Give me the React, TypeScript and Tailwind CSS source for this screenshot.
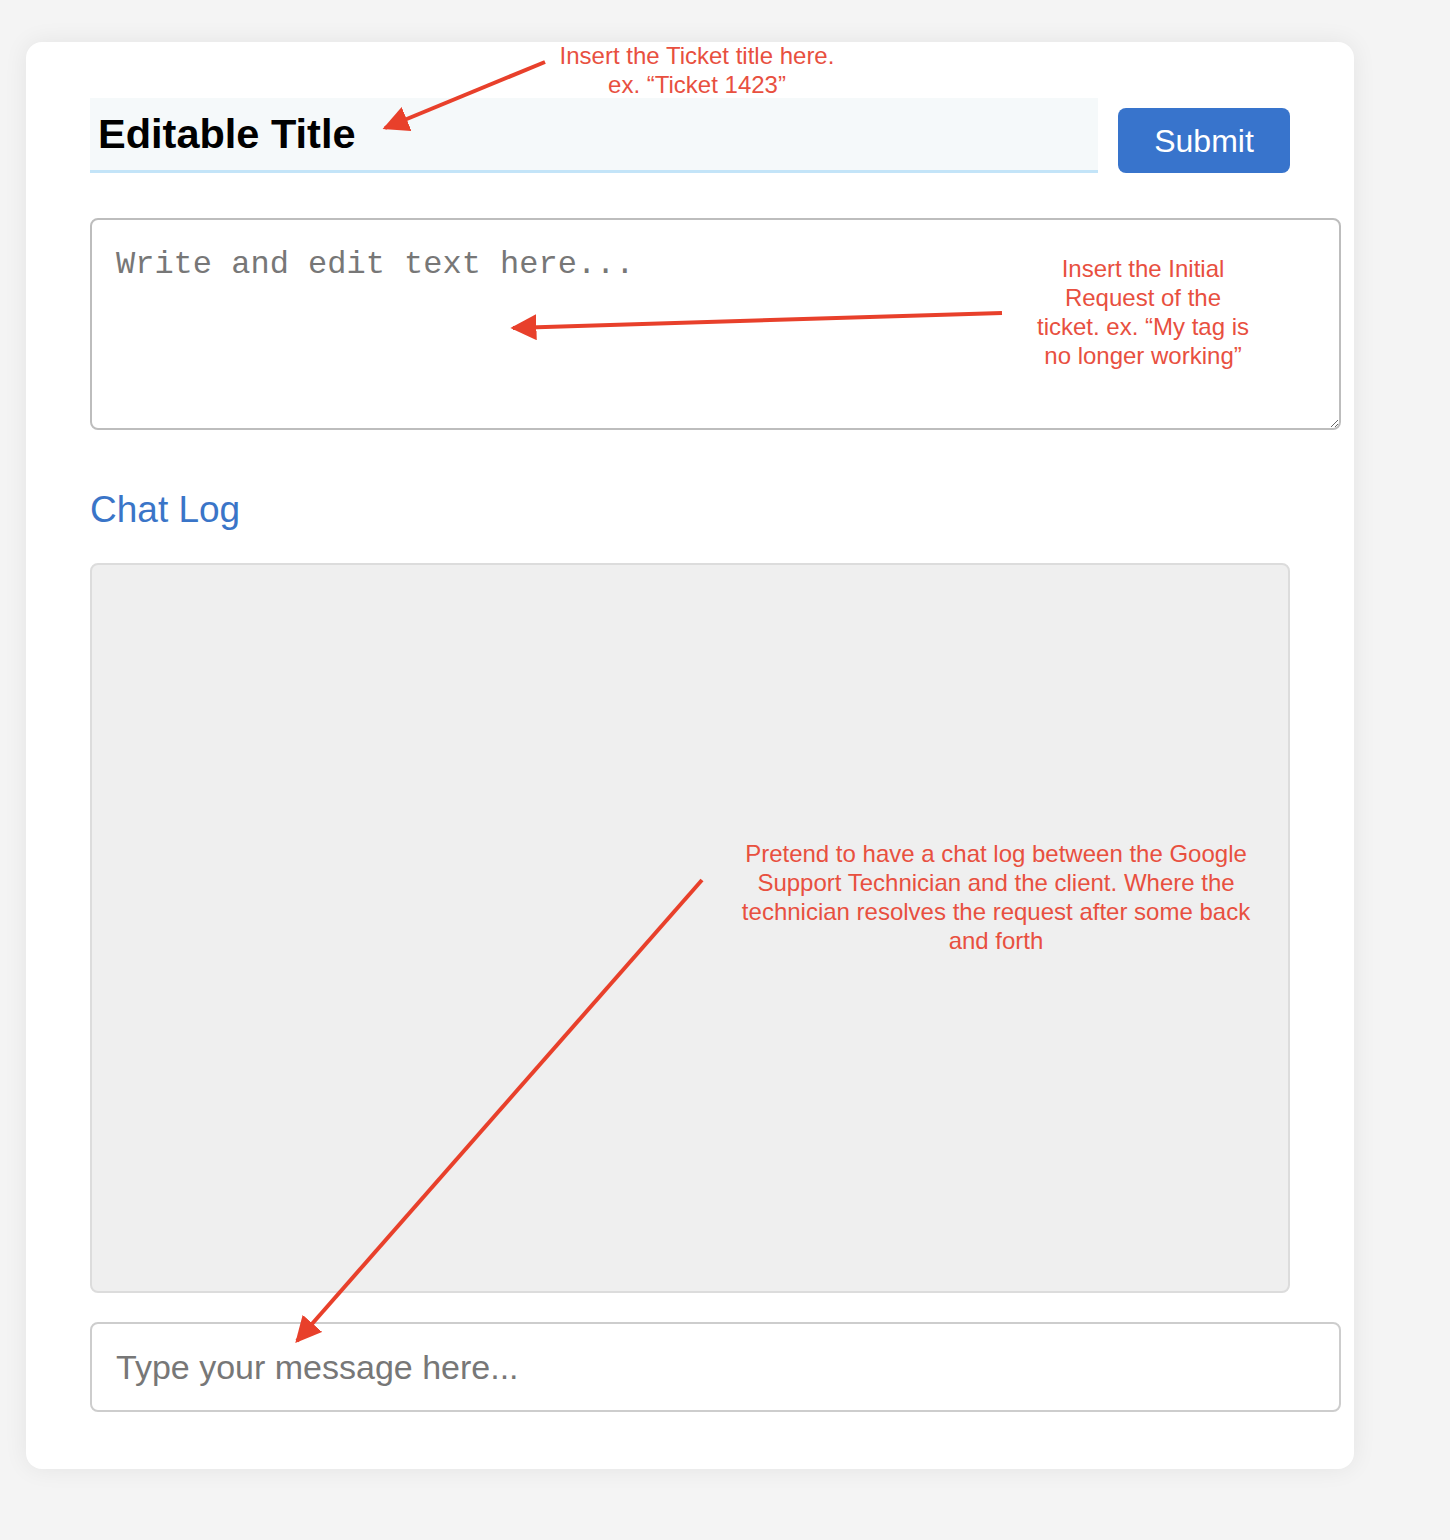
const red = '#e8402b'

function Arrows() {
  const lines = [
    { x1: 545, y1: 62, x2: 385, y2: 128 },
    { x1: 1002, y1: 313, x2: 513, y2: 328 },
    { x1: 702, y1: 880, x2: 297, y2: 1341 },
  ]
  return (
    <svg className="pointer-events-none absolute left-0 top-0" width="1450" height="1540">
      <defs>
        <marker id="head" viewBox="0 0 10 10" refX="9" refY="5" markerWidth="6.5" markerHeight="6.5" orient="auto">
          <path d="M0 0 L10 5 L0 10 z" fill={red} />
        </marker>
      </defs>
      {lines.map((l, i) => (
        <line key={i} {...l} stroke={red} strokeWidth="4" markerEnd="url(#head)" />
      ))}
    </svg>
  )
}

function Note({ className, children }: { className: string; children: React.ReactNode }) {
  return (
    <p className={`absolute text-center text-[24px] leading-[29px] text-[#e8503f] ${className}`}>{children}</p>
  )
}

export default function App() {
  return (
    <div className="relative min-h-[1540px] bg-[#f4f4f4] pl-[26px] pt-[42px] font-['Liberation_Sans',Arial,sans-serif]">
      <div className="w-[1328px] rounded-2xl bg-white px-16 pb-[57px] pt-[56px] shadow-[0_0_24px_rgba(0,0,0,0.07)]">
        <div className="flex items-end gap-5">
          <div className="h-[75px] flex-1 border-b-[3px] border-[#c3e4f8] bg-[#f5f9fa] pl-2 pt-[8px] text-[41.5px] font-bold leading-[56px] text-black">
            Editable Title
          </div>
          <button className="h-[65px] w-[172px] rounded-lg bg-[#3874cc] text-[32px] text-white">Submit</button>
        </div>

        <textarea
          placeholder="Write and edit text here..."
          className="mt-[45px] block h-[212px] w-[1251px] rounded-lg border-2 border-[#bdbdbd] px-6 pt-[21px] font-['Liberation_Mono',monospace] text-[32px] leading-[48px] placeholder:text-[#777]"
        />

        <h2 className="mt-[56px] text-[37px] leading-[48px] text-[#3a75c8]">Chat Log</h2>

        <div className="mt-[29px] h-[730px] rounded-lg border-2 border-[#dcdcdc] bg-[#efefef]" />

        <input
          placeholder="Type your message here..."
          className="mt-[29px] block h-[90px] w-[1251px] rounded-lg border-2 border-[#cdcdcd] px-6 text-[34px] placeholder:text-[#777]"
        />
      </div>

      <Arrows />
      <Note className="left-[547px] top-[41px] w-[300px]">
        Insert the Ticket title here.
        <br />
        ex. “Ticket 1423”
      </Note>
      <Note className="left-[1033px] top-[254px] w-[220px]">
        Insert the Initial Request of the ticket. ex. “My tag is no longer working”
      </Note>
      <Note className="left-[736px] top-[839px] w-[520px]">
        Pretend to have a chat log between the Google Support Technician and the client. Where the technician resolves the request after some back and forth
      </Note>
    </div>
  )
}
